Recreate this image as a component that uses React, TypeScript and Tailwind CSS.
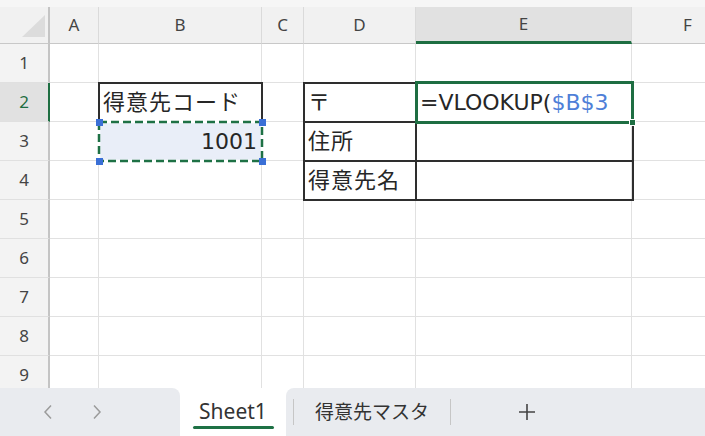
import React from "react";

type Col = { key: string; w: string };

const cols: Col[] = [
  { key: "A", w: "w-[49px]" },
  { key: "B", w: "w-[163px]" },
  { key: "C", w: "w-[42px]" },
  { key: "D", w: "w-[112px]" },
  { key: "E", w: "w-[216px]" },
  { key: "F", w: "w-[112px]" },
];

const rows = [1, 2, 3, 4, 5, 6, 7, 8, 9];

// セルの中身
const cells: Record<string, React.ReactNode> = {
  B2: <span className="tracking-[1px]">得意先コード</span>,
  B3: "1001",
  D2: "〒",
  D3: <span className="tracking-[1px]">住所</span>,
  D4: <span className="tracking-[1px]">得意先名</span>,
  E2: (
    <>
      =VLOOKUP(<span className="text-[#4f7fd8]">$B$3</span>
    </>
  ),
};

const ColumnHeader = () => (
  <div className="flex h-[37px] shrink-0 bg-[#f1f1f1]">
    <div className="relative w-[50px] shrink-0 border-r-2 border-b border-r-[#c4c4c4] border-b-[#c8c8c8]">
      <svg className="absolute inset-0" width="50" height="37">
        <polygon points="22,30 45,30 45,8" fill="#dcdcdc" />
      </svg>
    </div>
    {cols.map((c) => (
      <div
        key={c.key}
        className={`${c.w} shrink-0 flex items-center justify-center border-r border-r-[#dadada] text-[17px] text-[#444] ${
          c.key === "E"
            ? "bg-[#e1e1e1] border-b-[3px] border-b-[#1e6e42] text-[#1e6e42]"
            : "border-b border-b-[#c8c8c8]"
        }`}
      >
        {c.key}
      </div>
    ))}
  </div>
);

const SheetRow = ({ r }: { r: number }) => (
  <div className="flex h-[39px] shrink-0">
    <div
      className={`w-[50px] shrink-0 flex items-center justify-center border-r-2 border-b border-b-[#e0e0e0] text-[17px] ${
        r === 2
          ? "bg-[#e1e1e1] border-r-[#1e6e42] text-[#1e6e42]"
          : "bg-[#f3f3f3] border-r-[#c4c4c4] text-[#444]"
      }`}
    >
      {r}
    </div>
    {cols.map((c) => {
      const id = `${c.key}${r}`;
      const isNum = id === "B3";
      return (
        <div
          key={id}
          className={`${c.w} shrink-0 flex items-center whitespace-nowrap border-r border-b border-[#e1e1e1] px-1 text-[22px] text-[#262626] font-['DejaVu_Sans','Noto_Sans_CJK_JP',sans-serif] ${
            isNum ? "justify-end bg-[#e9eef8]" : ""
          }`}
        >
          {cells[id]}
        </div>
      );
    })}
  </div>
);

const Chevron = ({ dir }: { dir: "left" | "right" }) => (
  <svg width="10" height="16" viewBox="0 0 10 16">
    <path
      d={dir === "left" ? "M8 1.5 L2 8 L8 14.5" : "M2 1.5 L8 8 L2 14.5"}
      fill="none"
      stroke="#9b9b9b"
      strokeWidth="1.5"
    />
  </svg>
);

const TabBar = () => (
  <div className="flex h-[48px] shrink-0 bg-white font-['Noto_Sans','Noto_Sans_CJK_JP',sans-serif] text-[#333]">
    <div className="w-[180px] shrink-0 flex items-center gap-[39px] pl-[43px] bg-[#e9ebef] rounded-tr-[8px]">
      <Chevron dir="left" />
      <Chevron dir="right" />
    </div>
    <div className="w-[106px] shrink-0 flex flex-col items-center justify-center pt-[2px]">
      <span className="text-[21px] leading-[26px]">Sheet1</span>
      <div className="mt-[2px] h-[3px] w-[81px] rounded-full bg-[#1e7145]" />
    </div>
    <div className="flex-1 flex items-center bg-[#e9ebef] rounded-tl-[8px]">
      <div className="ml-[7px] h-[26px] w-px bg-[#c6c6c6]" />
      <span className="ml-[21px] text-[19px]">得意先マスタ</span>
      <div className="ml-[21px] h-[26px] w-px bg-[#c6c6c6]" />
      <svg className="ml-[67px]" width="18" height="18" viewBox="0 0 18 18">
        <path d="M9 1 V17 M1 9 H17" stroke="#444" strokeWidth="1.6" />
      </svg>
    </div>
  </div>
);

export default function App() {
  return (
    <div className="relative w-[705px] h-[436px] overflow-hidden bg-white flex flex-col font-['Noto_Sans',sans-serif]">
      <div className="h-[7px] shrink-0 bg-[#f6f6f6]" />
      <ColumnHeader />
      <div className="flex-1 flex flex-col overflow-hidden">
        {rows.map((r) => (
          <SheetRow key={r} r={r} />
        ))}
      </div>
      <TabBar />

      {/* 罫線: B2 */}
      <div className="absolute left-[98px] top-[82px] w-[165px] h-[41px] border-2 border-[#2e2e2e]" />
      {/* 罫線: D2:E4 */}
      <div className="absolute left-[303px] top-[82px] w-[331px] h-[119px] border-2 border-[#2e2e2e]" />
      <div className="absolute left-[415px] top-[82px] w-[2px] h-[119px] bg-[#2e2e2e]" />
      <div className="absolute left-[303px] top-[121px] w-[331px] h-[2px] bg-[#2e2e2e]" />
      <div className="absolute left-[303px] top-[160px] w-[331px] h-[2px] bg-[#2e2e2e]" />

      {/* アクティブセル E2 */}
      <div className="absolute left-[415px] top-[81px] w-[219px] h-[43px] border-[3px] border-[#1e6e42]" />
      <div className="absolute left-[629px] top-[119px] w-[7px] h-[7px] bg-[#1e6e42] border border-white" />

      {/* コピー範囲 B3 */}
      <svg className="absolute left-[96px] top-[119px]" width="170" height="46">
        <rect x="3" y="3" width="163" height="39" fill="none" stroke="#fff" strokeWidth="2.5" />
        <rect
          x="3"
          y="3"
          width="163"
          height="39"
          fill="none"
          stroke="#1e7145"
          strokeWidth="2.5"
          strokeDasharray="8 4"
        />
        <rect x="0" y="0" width="7" height="7" fill="#3a6fd6" />
        <rect x="163" y="0" width="7" height="7" fill="#3a6fd6" />
        <rect x="0" y="39" width="7" height="7" fill="#3a6fd6" />
        <rect x="163" y="39" width="7" height="7" fill="#3a6fd6" />
      </svg>
    </div>
  );
}
